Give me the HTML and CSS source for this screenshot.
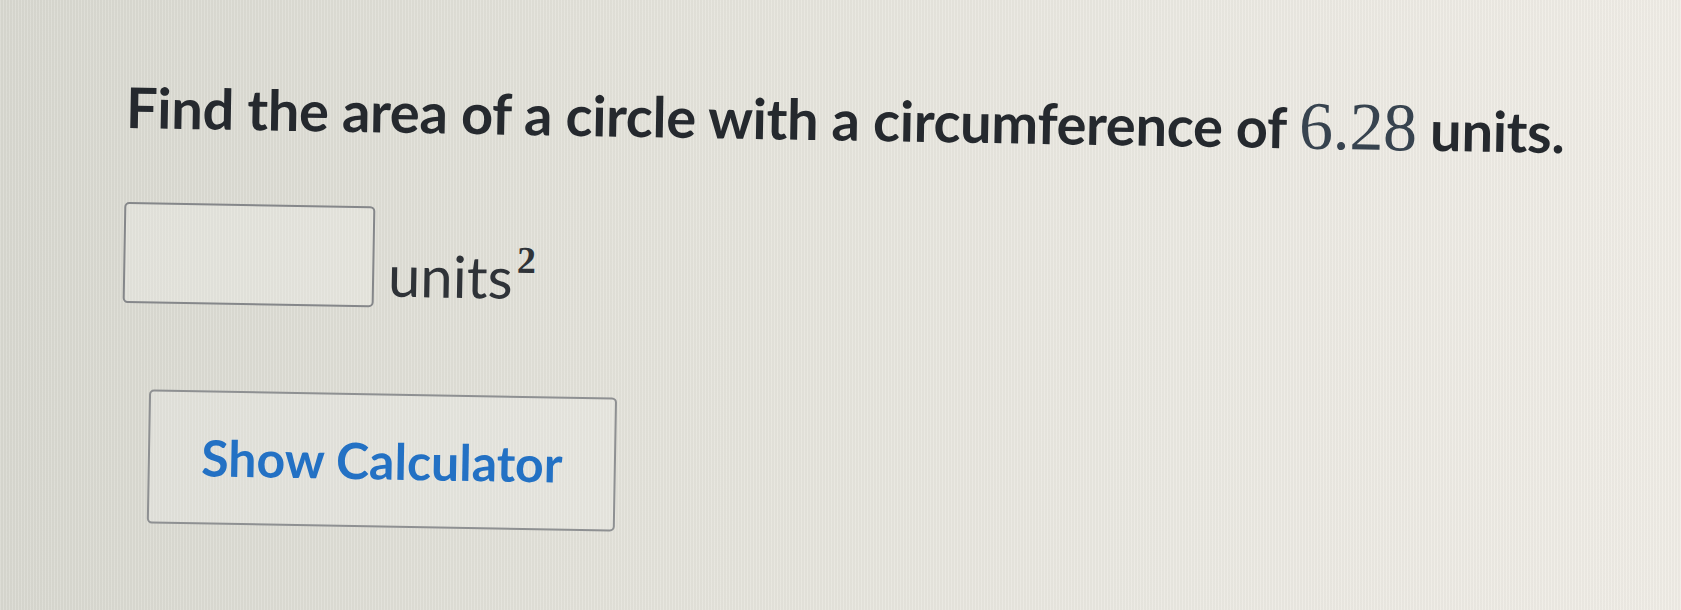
FILE: index.html
```html
<!DOCTYPE html>
<html>
<head>
<meta charset="utf-8">
<link rel="stylesheet" href="styles.css">
</head>
<body>
<main class="page">
  <p class="question">Find the area of a circle with a circumference of <span class="math">6.28</span> units.</p>
  <div class="answer-row">
    <div class="answer-box"></div>
    <span class="unit">units<sup class="exp">2</sup></span>
  </div>
  <button class="calc-btn">Show Calculator</button>
</main>
</body>
</html>
```
FILE: styles.css
```css
html, body {
  margin: 0;
  padding: 0;
}
body {
  width: 1681px;
  height: 610px;
  overflow: hidden;
  font-family: Lato, "Noto Sans", sans-serif;
  color: #25292e;
  background:
    repeating-linear-gradient(90deg, rgba(255,255,255,0.10) 0 1px, rgba(0,0,0,0.025) 1px 3px),
    linear-gradient(90deg, #d9d9d1 0%, #e3e2da 35%, #ebe9e2 70%, #f0ede6 100%);
}
.page {
  padding: 70px 0 0 126px;
  display: flex;
  flex-direction: column;
  align-items: flex-start;
  transform: rotate(1deg);
  transform-origin: 126px 110px;
}
.question {
  margin: 0;
  font-weight: 700;
  font-size: 56px;
  line-height: 70px;
  letter-spacing: -0.3px;
}
.math {
  font-family: "Liberation Serif", "DejaVu Serif", serif;
  font-weight: 400;
  font-size: 68px;
  color: #37434f;
}
.answer-row {
  margin-top: 60px;
  display: flex;
  align-items: flex-end;
  gap: 14px;
}
.answer-box {
  width: 247px;
  height: 97px;
  border: 2px solid #85878a;
  border-radius: 5px;
  background: rgba(240,240,235,0.35);
}
.unit {
  font-size: 58px;
  line-height: 58px;
  margin-bottom: 4px;
  color: #2f3338;
}
.exp {
  font-family: "Liberation Serif", "DejaVu Serif", serif;
  font-weight: 700;
  font-size: 38px;
  vertical-align: 26px;
  line-height: 0;
  margin-left: 4px;
}
.calc-btn {
  margin-top: 86px;
  margin-left: 28px;
  width: 468px;
  height: 134px;
  border: 2px solid #8e9092;
  border-radius: 5px;
  background: rgba(240,240,235,0.3);
  font-family: Lato, "Noto Sans", sans-serif;
  font-weight: 700;
  font-size: 50px;
  color: #2371c4;
  padding: 0;
  cursor: pointer;
}
```
